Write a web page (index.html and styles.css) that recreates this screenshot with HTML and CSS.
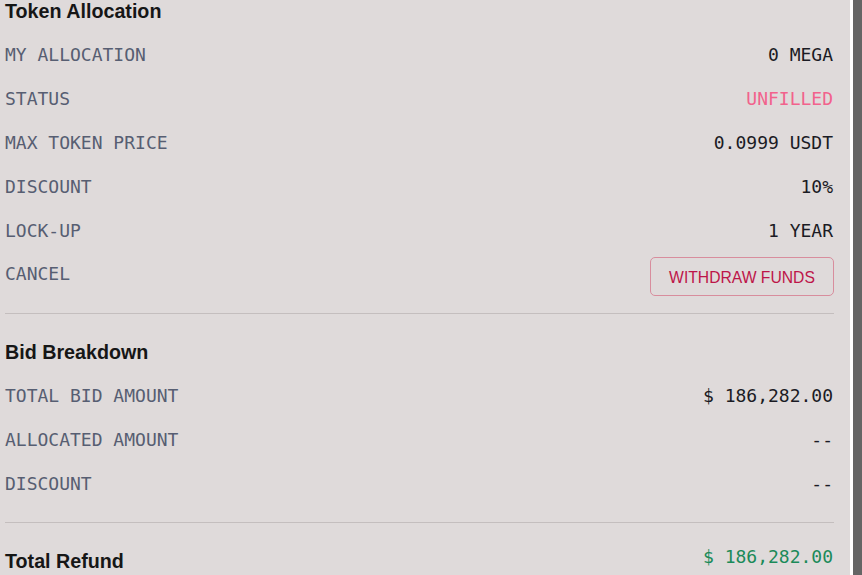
FILE: index.html
```html
<!DOCTYPE html>
<html lang="en">
<head>
  <meta charset="UTF-8" />
  <meta name="viewport" content="width=device-width, initial-scale=1.0" />
  <title>Token Allocation</title>
  <link rel="stylesheet" href="styles.css">
</head>
<body>
  <div class="page">
    <main class="panel">
      <section class="block">
        <h2>Token Allocation</h2>
        <div class="rows">
          <div class="row"><span class="label">MY ALLOCATION</span><span class="value">0 MEGA</span></div>
          <div class="row"><span class="label">STATUS</span><span class="value pink">UNFILLED</span></div>
          <div class="row"><span class="label">MAX TOKEN PRICE</span><span class="value">0.0999 USDT</span></div>
          <div class="row"><span class="label">DISCOUNT</span><span class="value">10%</span></div>
          <div class="row"><span class="label">LOCK-UP</span><span class="value">1 YEAR</span></div>
          <div class="row row-action">
            <span class="label">CANCEL</span>
            <button class="withdraw">WITHDRAW FUNDS</button>
          </div>
        </div>
      </section>

      <hr>

      <section class="block">
        <h2>Bid Breakdown</h2>
        <div class="rows">
          <div class="row"><span class="label">TOTAL BID AMOUNT</span><span class="value">$ 186,282.00</span></div>
          <div class="row"><span class="label">ALLOCATED AMOUNT</span><span class="value">--</span></div>
          <div class="row"><span class="label">DISCOUNT</span><span class="value">--</span></div>
        </div>
      </section>

      <hr>

      <section class="block total">
        <h2>Total Refund</h2>
        <span class="value green">$ 186,282.00</span>
      </section>
    </main>
    <div class="rail"></div>
  </div>
</body>
</html>
```

FILE: styles.css
```css
html, body {
  margin: 0;
  height: 100%;
  overflow: hidden;
}
body {
  background: #dfdada;
  color: #1a1a1a;
  font-family: "Liberation Sans", Arial, sans-serif;
}
.page {
  display: flex;
  height: 100%;
}
.panel {
  flex: 1;
  padding: 0 16px 0 5px;
}
.rail {
  width: 9px;
  background: #656565;
  border-left: 3px solid #fff;
}
h2 {
  margin: 0;
  font-size: 19.7px;
  line-height: 22px;
  font-weight: 700;
  color: #161616;
}
.rows {
  margin-top: 10px;
}
.row {
  display: flex;
  justify-content: space-between;
  align-items: center;
  height: 44px;
}
.label, .value {
  font-family: "DejaVu Sans Mono", "Liberation Mono", monospace;
  font-size: 18px;
  letter-spacing: 0;
}
.label {
  color: #575e72;
}
.value {
  color: #1b1b24;
  margin-right: 1px;
}
.pink {
  color: #f2628c;
}
.green {
  color: #1b8a59;
}
.row-action {
  box-sizing: border-box;
  align-items: flex-start;
  padding-top: 5px;
}
.row-action .label {
  margin-top: 6px;
}
.withdraw {
  width: 184px;
  height: 39px;
  background: transparent;
  border: 1px solid #d88d9d;
  border-radius: 5px;
  color: #bd1549;
  font-family: "Liberation Sans", Arial, sans-serif;
  font-size: 15.7px;
  padding: 2px 0 0;
  cursor: pointer;
}
hr {
  border: 0;
  border-top: 1px solid #c4bebe;
  margin: 17px 0 27px;
}
.total {
  display: flex;
  justify-content: space-between;
  align-items: flex-start;
}
.total .value {
  line-height: 14px;
}
```
